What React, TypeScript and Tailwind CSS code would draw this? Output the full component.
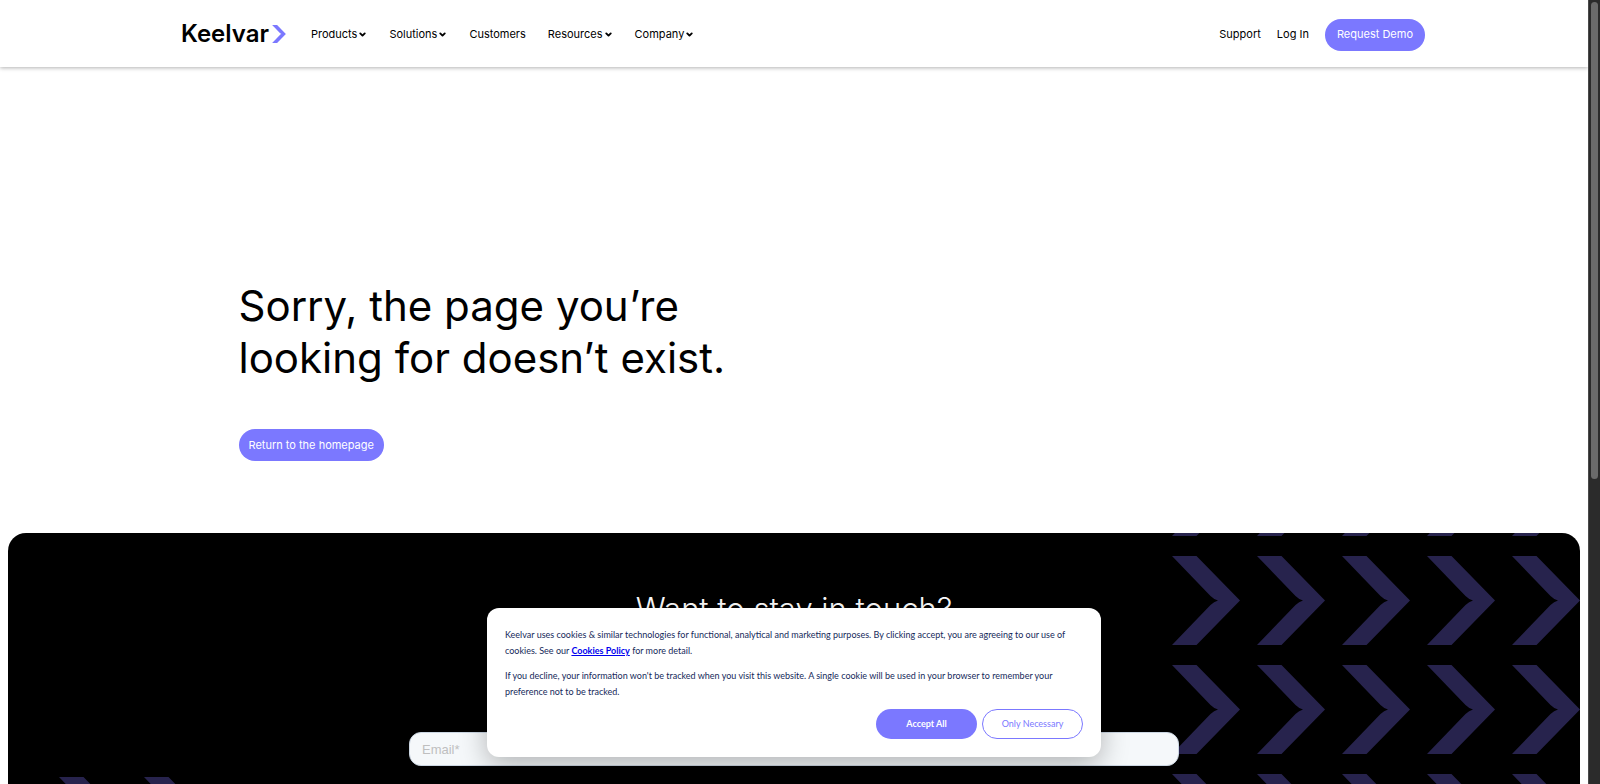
import { ChevronDown } from 'lucide-react';

const navItems = [
  { label: 'Products', hasMenu: true },
  { label: 'Solutions', hasMenu: true },
  { label: 'Customers', hasMenu: false },
  { label: 'Resources', hasMenu: true },
  { label: 'Company', hasMenu: true },
];

const patternRows = [0, 1, 2, 3];
const patternCols = [0, 1, 2, 3, 4];

function Arrow({ className }: { className: string }) {
  return (
    <svg viewBox="0 0 68 89" className={className} fill="currentColor" aria-hidden="true">
      <path d="M0 0H24.5L68 44.5L24.5 89H0L38.5 49Q42 45.5 46 44.5Q42 43.5 38.5 40Z" />
    </svg>
  );
}

function Header() {
  return (
    <header className="relative z-10 bg-white shadow-[0_1px_4px_rgba(0,0,0,0.3)]">
      <div className="mx-auto flex h-[67px] max-w-[1262px] items-center pt-[2px]">
        <a href="#home" className="mr-[25px] ml-[18px] flex items-center gap-[3px] pb-px">
          <span className="text-2xl leading-none font-semibold">Keelvar</span>
          <Arrow className="h-[18px] w-[14px] text-[#7b78ff]" />
        </a>
        <nav className="flex flex-1 items-center gap-[22px]">
          {navItems.map((item) =>
            item.hasMenu ? (
              <button key={item.label} type="button" className="flex items-center gap-px text-[11px]">
                {item.label}
                <ChevronDown className="size-[9px]" strokeWidth={5} />
              </button>
            ) : (
              <a key={item.label} href="#customers" className="text-[11px]">
                {item.label}
              </a>
            )
          )}
        </nav>
        <div className="flex items-center gap-4 text-[11px]">
          <a href="#support">Support</a>
          <a href="#login">Log In</a>
          <a href="#demo" className="flex h-8 items-center rounded-full bg-[#7b78ff] px-3 text-white">
            Request Demo
          </a>
        </div>
      </div>
    </header>
  );
}

function Hero() {
  return (
    <section className="mx-auto max-w-[1111px] pt-[213px] pb-[72px]">
      <h1 className="text-[42px] leading-[52px]">
        Sorry, the page you’re
        <br />
        looking for doesn’t exist.
      </h1>
      <a
        href="#home"
        className="mt-[45px] inline-flex h-8 items-center rounded-full bg-[#7b78ff] px-[10px] text-[11px] text-white"
      >
        Return to the homepage
      </a>
    </section>
  );
}

function Signup() {
  return (
    <section className="relative mx-2 h-[480px] overflow-hidden rounded-[18px] bg-black text-white">
      {/* Arrow pattern, right */}
      <div className="absolute -top-[86px] right-0 grid grid-cols-5 gap-x-[17px] gap-y-[20px] text-[#27234d]">
        {patternRows.map((row) =>
          patternCols.map((col) => <Arrow key={`${row}-${col}`} className="h-[89px] w-[68px]" />)
        )}
      </div>
      {/* Arrow pattern, left */}
      <div className="absolute top-[244px] left-[51px] flex gap-[17px] text-[#27234d]">
        <Arrow className="h-[89px] w-[68px]" />
        <Arrow className="h-[89px] w-[68px]" />
      </div>

      <form className="relative mx-auto max-w-[770px] pt-[56px]">
        <h2 className="text-center text-[31px] leading-10 font-light">Want to stay in touch?</h2>
        <input
          type="email"
          aria-label="Email"
          placeholder="Email*"
          className="mt-[103px] h-[34px] w-full rounded-xl border border-[#cbd6e2] bg-[#f5f8fa] px-3 font-['Liberation_Sans',sans-serif] text-[13px] placeholder:text-[#bfbfbf]"
        />
      </form>
    </section>
  );
}

function CookieBanner() {
  return (
    <div
      role="dialog"
      aria-label="Cookie consent"
      className="absolute bottom-[27px] left-1/2 z-20 w-[614px] -translate-x-1/2 rounded-xl bg-white px-[18px] pt-[19px] pb-[18px] font-[Lato,sans-serif] text-[9px] leading-4 text-[#15295a] shadow-[0_8px_28px_rgba(0,0,0,0.28)]"
    >
      <p>
        Keelvar uses cookies &amp; similar technologies for functional, analytical and marketing purposes. By clicking
        accept, you are agreeing to our use of cookies. See our{' '}
        <a href="#cookies" className="font-bold text-[#0000ee] underline">
          Cookies Policy
        </a>{' '}
        for more detail.
      </p>
      <p className="mt-[9px]">
        If you decline, your information won't be tracked when you visit this website. A single cookie will be used in
        your browser to remember your preference not to be tracked.
      </p>
      <div className="mt-[9px] flex justify-end gap-[5px]">
        <button type="button" className="h-[30px] w-[101px] rounded-full bg-[#7b78ff] font-bold text-white">
          Accept All
        </button>
        <button type="button" className="h-[30px] w-[101px] rounded-full border border-[#7b78ff] text-[#7b78ff]">
          Only Necessary
        </button>
      </div>
    </div>
  );
}

export default function App() {
  return (
    <div className="flex h-screen bg-white font-[Inter,sans-serif] text-black">
      <div className="relative min-w-0 flex-1 overflow-hidden">
        <Header />
        <main>
          <Hero />
          <Signup />
        </main>
        <CookieBanner />
      </div>
      {/* Scrollbar */}
      <div className="w-3 border-l border-[#4a4a4a] bg-[#2b2b2b] px-[2px] pt-[2px]">
        <div className="h-[61%] w-[7px] rounded-full bg-[#6b6b6b]" />
      </div>
    </div>
  );
}
